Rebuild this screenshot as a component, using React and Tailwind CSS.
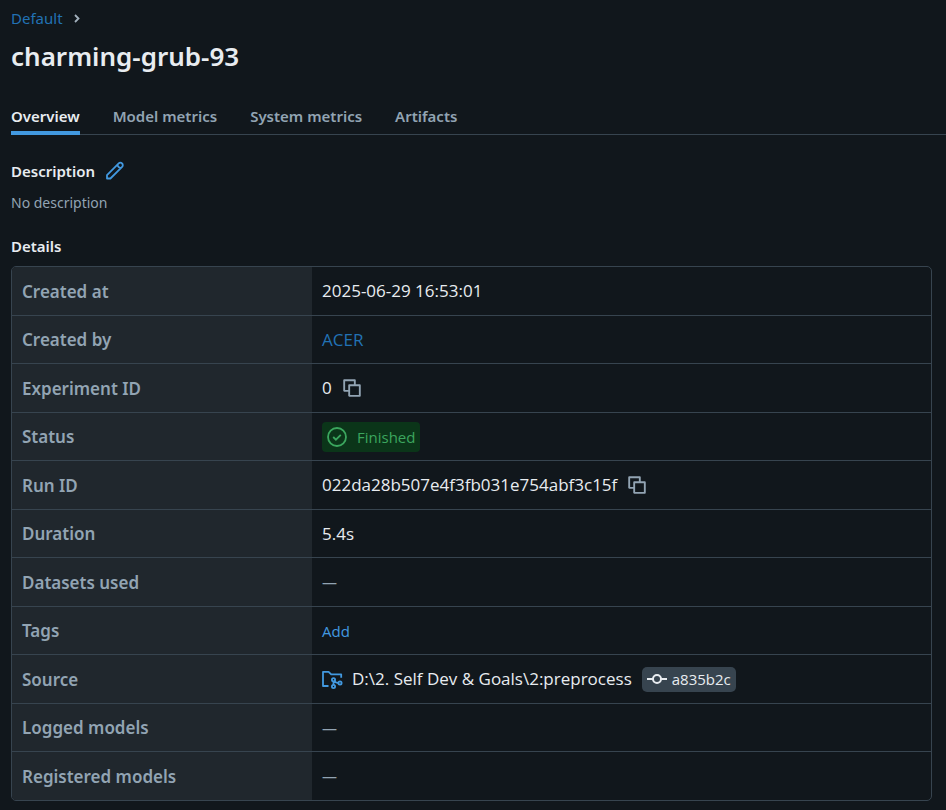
import React from "react";

const tabs = ["Overview", "Model metrics", "System metrics", "Artifacts"];

function CopyIcon() {
  return (
    <svg viewBox="0 0 16 16" className="size-5" fill="currentColor" aria-hidden="true">
      <path
        fillRule="evenodd"
        clipRule="evenodd"
        d="M1.75 1a.75.75 0 0 0-.75.75v8.5c0 .414.336.75.75.75H5v3.25c0 .414.336.75.75.75h8.5a.75.75 0 0 0 .75-.75v-8.5a.75.75 0 0 0-.75-.75H11V1.75a.75.75 0 0 0-.75-.75zM9.5 5V2.5h-7v7H5V5.75A.75.75 0 0 1 5.75 5zm-3 8.5v-7h7v7z"
      />
    </svg>
  );
}

function PencilIcon() {
  return (
    <svg viewBox="0 0 20 20" className="size-5" fill="none" stroke="currentColor" strokeWidth="1.8" strokeLinejoin="round" aria-hidden="true">
      <path d="M2 17.500v-3.400L13.700 2.400a2.300 2.300 0 0 1 3.300 0l.1.100a2.300 2.300 0 0 1 0 3.300L5.400 17.500zM12.600 3.500c-.3 1.800 1.600 3.700 3.400 3.400" />
    </svg>
  );
}

function CheckCircleIcon() {
  return (
    <svg viewBox="0 0 20 20" className="size-5" fill="none" stroke="currentColor" strokeWidth="1.8" aria-hidden="true">
      <circle cx="10" cy="10" r="9" />
      <path d="m6.2 10 2.7 2.7 4.9-4.9" />
    </svg>
  );
}

function FolderBranchIcon() {
  return (
    <svg viewBox="0 0 22 20" className="h-5 w-[22px] shrink-0 text-[#4299e0]" fill="none" stroke="currentColor" strokeWidth="1.8" aria-hidden="true">
      <path d="M6.500 17H1V2.800H6.600L9.200 5.300H19.200V8.800" strokeLinejoin="round" />
      <circle cx="11.500" cy="10.800" r="1.600" />
      <circle cx="11.500" cy="17.500" r="1.600" />
      <circle cx="18" cy="14" r="1.600" />
      <path d="M11.500 12.300v3.700M12.500 12c.8 1.500 2 2 4 2" strokeWidth="1.800" />
    </svg>
  );
}

function CommitIcon() {
  return (
    <svg viewBox="0 0 20 20" className="size-5" fill="none" stroke="currentColor" strokeWidth="2" aria-hidden="true">
      <circle cx="10" cy="10" r="4" />
      <path d="M0 10h6M14 10h6" />
    </svg>
  );
}

function CopyButton({ label }) {
  return (
    <button type="button" aria-label={label} className="text-[#92a4b3]">
      <CopyIcon />
    </button>
  );
}

const Empty = () => <span className="text-[15px] text-[#92a4b3]">—</span>;

const rows = [
  ["Created at", <span>2025-06-29 16:53:01</span>],
  ["Created by", <a href="#user" className="text-[#2272b4]">ACER</a>],
  ["Experiment ID", <><span>0</span><CopyButton label="Copy experiment ID" /></>],
  [
    "Status",
    <span className="flex h-[30px] items-center gap-[10px] rounded bg-[#0b3519] px-[5px] text-[15px] text-[#3ba65e]">
      <CheckCircleIcon />
      Finished
    </span>,
  ],
  ["Run ID", <><span>022da28b507e4f3fb031e754abf3c15f</span><CopyButton label="Copy run ID" /></>],
  ["Duration", <span>5.4s</span>],
  ["Datasets used", <Empty />],
  ["Tags", <button type="button" className="text-[15px] text-[#4299e0]">Add</button>],
  [
    "Source",
    <>
      <span className="flex items-center gap-2">
        <FolderBranchIcon />
        <span className="whitespace-nowrap">D:\2. Self Dev &amp; Goals\2:preprocess</span>
      </span>
      <span className="flex h-[25px] items-center gap-[5px] rounded-[5px] bg-[#37444f] px-[5px] text-[15px]">
        <CommitIcon />
        a835b2c
      </span>
    </>,
  ],
  ["Logged models", <Empty />],
  ["Registered models", <Empty />],
];

export default function App() {
  return (
    <main className="min-h-screen bg-[#11171c] pt-2 pb-[9px] pl-[11px] font-['Noto_Sans',sans-serif] text-[15px] text-[#e8ecf0]">
      <nav aria-label="Breadcrumb" className="flex h-5 items-center gap-[10px]">
        <a href="#default" className="text-[#2272b4]">Default</a>
        <svg viewBox="0 0 8 10" className="h-[10px] w-2 text-[#a3b1bd]" fill="none" stroke="currentColor" strokeWidth="1.800" aria-hidden="true">
          <path d="m2 2 3.500 3.500L2 9" />
        </svg>
      </nav>
      <h1 className="mt-2 text-[26px] leading-10 font-semibold">charming-grub-93</h1>

      <div role="tablist" className="mt-[26px] flex h-[33px] gap-[33px] border-b border-[#37444f]">
        {tabs.map((tab, i) => (
          <button
            key={tab}
            type="button"
            role="tab"
            aria-selected={i === 0}
            className={
              i === 0
                ? "h-[33px] border-b-4 border-[#4299e0] font-semibold text-[#e8ecf0]"
                : "h-[33px] pb-1 font-semibold text-[#92a4b3]"
            }
          >
            {tab}
          </button>
        ))}
      </div>

      <section className="mt-[26px]">
        <div className="flex h-5 items-center gap-[10px]">
          <h2 className="font-semibold">Description</h2>
          <button type="button" aria-label="Edit description" className="text-[#4299e0]">
            <PencilIcon />
          </button>
        </div>
        <p className="mt-3 text-sm leading-5 text-[#92a4b3]">No description</p>
      </section>

      <section className="mt-[23px] mr-[14px]">
        <h2 className="leading-5 font-semibold">Details</h2>
        <div className="mt-[10px] overflow-hidden rounded-[5px] border border-[#37444f]">
          <table className="w-full table-fixed border-separate border-spacing-0 text-[17px] leading-6">
            <tbody>
              {rows.map(([label, value]) => (
                <tr key={label} className="group h-[49px] last:h-12 even:h-12">
                  <th scope="row" className="w-[300px] border-b border-[#37444f] bg-[#20272d] px-[10px] pt-px pb-0 text-left font-semibold text-[#92a4b3] group-last:border-b-0">
                    {label}
                  </th>
                  <td className="border-b border-[#37444f] px-[10px] py-0 font-['Open_Sans','Noto_Sans',sans-serif] group-last:border-b-0">
                    <div className="flex items-center gap-[10px]">{value}</div>
                  </td>
                </tr>
              ))}
            </tbody>
          </table>
        </div>
      </section>
    </main>
  );
}
